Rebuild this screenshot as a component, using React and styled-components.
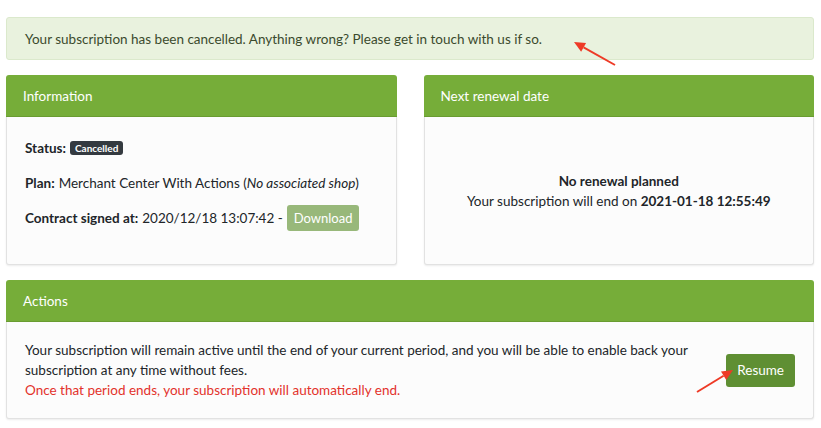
import React from 'react'
import styled, { createGlobalStyle } from 'styled-components'

const GlobalStyle = createGlobalStyle`
  html, body {
    margin: 0;
    padding: 0;
    background: #ffffff;
  }
  body {
    font-family: Lato, 'Open Sans', sans-serif;
    font-size: 13px;
    color: #212529;
  }
`

const Page = styled.div`
  position: relative;
  padding: 17px 7px 10px 6px;
  display: flex;
  flex-direction: column;
  gap: 15px;
`

const Alert = styled.div`
  background: #e9f2de;
  border: 1px solid #dbe9cc;
  border-radius: 3px;
  color: #3b4a2d;
  height: 41px;
  padding: 0 18px;
  display: flex;
  align-items: center;
  font-size: 13.5px;
`

const Row = styled.div`
  display: grid;
  grid-template-columns: 1fr 1fr;
  gap: 27px;
`

const Card = styled.div`
  display: flex;
  flex-direction: column;
`

const CardHeader = styled.div`
  background: #76ad39;
  color: #ffffff;
  height: 41px;
  padding: 0 17px;
  display: flex;
  align-items: center;
  font-size: 13.5px;
  border-radius: 3px 3px 0 0;
  border-bottom: 1px solid #6a9d32;
`

const CardBody = styled.div`
  background: #fcfcfc;
  border: 1px solid #e2e2e2;
  border-top: none;
  border-radius: 0 0 3px 3px;
  box-shadow: 0 1px 2px rgba(0, 0, 0, 0.08);
  height: ${p => p.height}px;
  box-sizing: border-box;
  padding: ${p => (p.centered ? '0' : '18px 18px')};
  display: flex;
  flex-direction: column;
  justify-content: ${p => (p.centered ? 'center' : 'flex-start')};
  align-items: ${p => (p.centered ? 'center' : 'stretch')};
`

const InfoLine = styled.div`
  display: flex;
  align-items: center;
  gap: 4px;
  height: 26px;
  margin-bottom: 9px;
  font-size: 13.5px;
`

const Label = styled.b`
  font-weight: 700;
`

const Badge = styled.span`
  background: #343a40;
  color: #ffffff;
  font-size: 10px;
  font-weight: 700;
  border-radius: 3px;
  padding: 2px 5px;
  line-height: 10px;
`

const Button = styled.button`
  font-family: inherit;
  font-size: ${p => p.fs}px;
  color: #ffffff;
  background: ${p => p.bg};
  border: none;
  border-radius: 3px;
  padding: 0 ${p => p.px}px;
  height: ${p => p.h}px;
  cursor: pointer;
`

const Center = styled.div`
  text-align: center;
  font-size: 13.5px;
  line-height: 20px;
`

const ActionsContent = styled.div`
  display: flex;
  align-items: center;
  justify-content: space-between;
`

const Paragraph = styled.p`
  margin: 0;
  font-size: 13.5px;
  line-height: 20px;
  max-width: 690px;
`

const Warning = styled.span`
  display: block;
  color: #e3322b;
`

const Arrow = styled.svg`
  position: absolute;
  left: 0;
  top: 0;
  pointer-events: none;
`

const ArrowHead = ({ x1, y1, x2, y2 }) => {
  const a = Math.atan2(y2 - y1, x2 - x1)
  const len = 11
  const w = 5
  const bx = x2 - len * Math.cos(a)
  const by = y2 - len * Math.sin(a)
  const px = -Math.sin(a) * w
  const py = Math.cos(a) * w
  return (
    <g>
      <line x1={x1} y1={y1} x2={bx} y2={by} stroke="#ee3a26" strokeWidth="2" />
      <polygon
        points={`${x2},${y2} ${bx + px},${by + py} ${bx - px},${by - py}`}
        fill="#ee3a26"
      />
    </g>
  )
}

export default function App() {
  return (
    <Page>
      <GlobalStyle />
      <Alert>
        Your subscription has been cancelled. Anything wrong? Please get in
        touch with us if so.
      </Alert>
      <Row>
        <Card>
          <CardHeader>Information</CardHeader>
          <CardBody height={148}>
            <InfoLine>
              <Label>Status:</Label>
              <Badge>Cancelled</Badge>
            </InfoLine>
            <InfoLine>
              <Label>Plan:</Label>
              <span>
                Merchant Center With Actions (<i>No associated shop</i>)
              </span>
            </InfoLine>
            <InfoLine>
              <Label>Contract signed at:</Label>
              <span>2020/12/18 13:07:42 -</span>
              <Button bg="#98b87a" px={7} h={26} fs={13}>
                Download
              </Button>
            </InfoLine>
          </CardBody>
        </Card>
        <Card>
          <CardHeader>Next renewal date</CardHeader>
          <CardBody height={148} centered>
            <Center>
              <Label>No renewal planned</Label>
              <br />
              Your subscription will end on <Label>2021-01-18 12:55:49</Label>
            </Center>
          </CardBody>
        </Card>
      </Row>
      <Card>
        <CardHeader>Actions</CardHeader>
        <CardBody height={97}>
          <ActionsContent>
            <Paragraph>
              Your subscription will remain active until the end of your
              current period, and you will be able to enable back your
              subscription at any time without fees.
              <Warning>
                Once that period ends, your subscription will automatically end.
              </Warning>
            </Paragraph>
            <Button bg="#5f8f33" px={11} h={33} fs={13.5}>
              Resume
            </Button>
          </ActionsContent>
        </CardBody>
      </Card>
      <Arrow width="821" height="428">
        <ArrowHead x1={615} y1={65} x2={574} y2={42} />
        <ArrowHead x1={697} y1={392} x2={733} y2={370} />
      </Arrow>
    </Page>
  )
}
